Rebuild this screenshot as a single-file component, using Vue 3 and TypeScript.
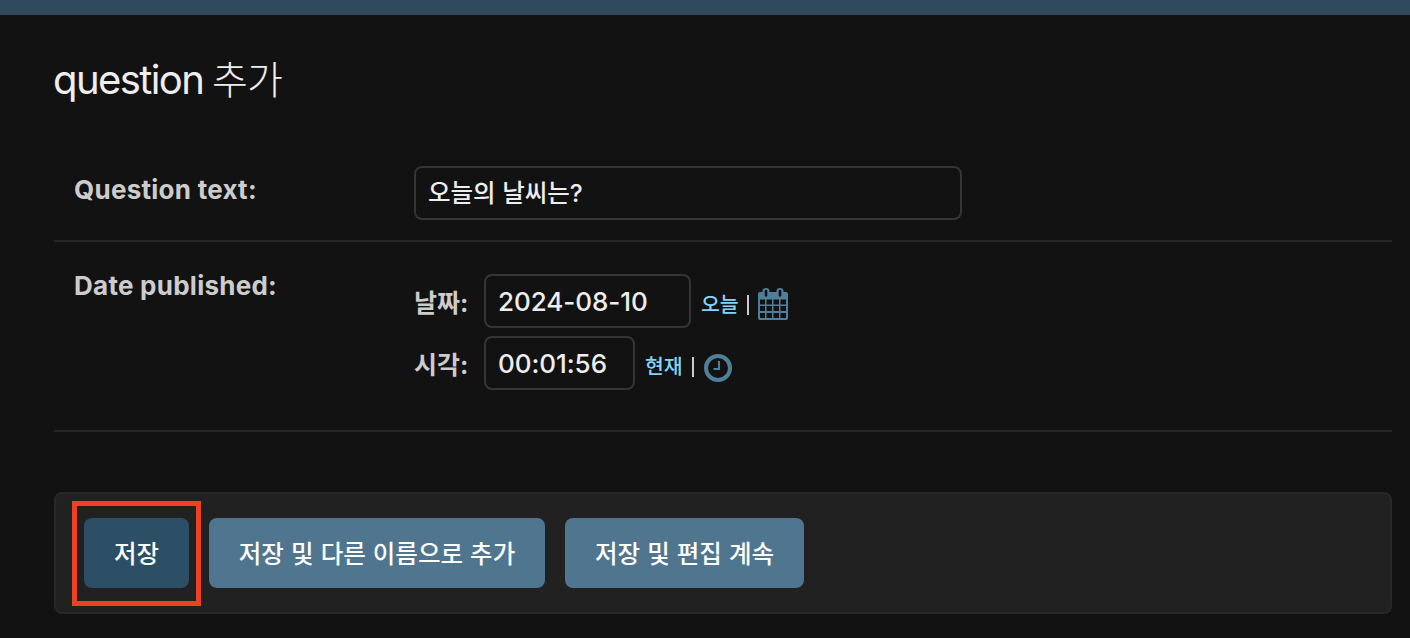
<script setup lang="ts">
import { ref } from 'vue'

const questionText = ref('오늘의 날씨는?')
const publishedDate = ref('2024-08-10')
const publishedTime = ref('00:01:56')
</script>

<template>
  <div class="page">
    <div class="breadcrumbs"></div>
    <main class="content">
      <h1><span class="latin">question</span><span class="thin">추가</span></h1>
      <form @submit.prevent>
        <div class="form-row first">
          <label class="name">Question text:</label>
          <input v-model="questionText" class="field text" type="text" />
        </div>
        <div class="form-row second">
          <label class="name">Date published:</label>
          <div class="datetime">
            <div class="line">
              <span class="sub">날짜:</span>
              <input v-model="publishedDate" class="field date" type="text" />
              <a class="shortcut">오늘</a><i class="bar"></i>
              <svg class="calendar" width="30" height="32" viewBox="0 0 30 32">
                <path fill="#507f9b" fill-rule="evenodd" d="M2 4H4.500V3a3.500 3 0 0 1 7 0v1h7V3a3.500 3 0 0 1 7 0v1H28a2 2 0 0 1 2 2v24a2 2 0 0 1-2 2H2a2 2 0 0 1-2-2V6a2 2 0 0 1 2-2Z M6.700 3v4.500a1.300 1.300 0 0 0 2.600 0V3a1.300 1.300 0 0 0-2.600 0Z M20.700 3v4.500a1.300 1.300 0 0 0 2.600 0V3a1.300 1.300 0 0 0-2.600 0Z M2 11.500v5h5v-5Z M8.500 11.500v5H14v-5Z M15.500 11.500v5H21v-5Z M22.500 11.500v5H28v-5Z M2 18v5h5v-5Z M8.500 18v5H14v-5Z M15.500 18v5H21v-5Z M22.500 18v5H28v-5Z M2 25v5h5v-5Z M8.500 25v5H14v-5Z M15.500 25v5H21v-5Z M22.500 25v5H28v-5Z" />
              </svg>
            </div>
            <div class="line">
              <span class="sub">시각:</span>
              <input v-model="publishedTime" class="field time" type="text" />
              <a class="shortcut now">현재</a><i class="bar"></i>
              <svg class="clock" width="28" height="28" viewBox="0 0 28 28" fill="none" stroke="#507f9b">
                <circle cx="14" cy="14" r="12" stroke-width="4" />
                <path d="M15 7v8H9.500" stroke-width="2" />
              </svg>
            </div>
          </div>
        </div>
        <div class="submit-row">
          <div class="highlight"><button class="primary">저장</button></div>
          <button class="another">저장 및 다른 이름으로 추가</button>
          <button class="continue">저장 및 편집 계속</button>
        </div>
      </form>
    </main>
  </div>
</template>

<style>
body {
  margin: 0;
  background: #121212;
}
</style>

<style scoped>
* {
  box-sizing: border-box;
}
.page {
  height: 638px;
  overflow: hidden;
  background: #121212;
  color: #eee;
  font-family: Inter, "Noto Sans CJK KR", sans-serif;
}
.breadcrumbs {
  height: 15px;
  background: #2f4a5c;
}
.content {
  padding: 41px 18px 0 54px;
}
h1 {
  display: flex;
  align-items: center;
  gap: 9px;
  height: 48px;
  margin: 0 0 40px;
  font-size: 40px;
  font-weight: 400;
  line-height: 48px;
  white-space: nowrap;
}
.latin {
  width: 150px;
  margin-left: -1px;
  letter-spacing: -1.6px;
}
.thin {
  font-weight: 300;
  font-size: 39px;
  letter-spacing: -1px;
}
.form-row {
  display: flex;
  border-bottom: 2px solid #272727;
  padding-left: 20px;
}
.first {
  height: 98px;
  padding-top: 22px;
}
.second {
  height: 190px;
  padding-top: 32px;
}
.name {
  width: 340px;
  height: 48px;
  font-size: 26px;
  font-weight: 700;
  line-height: 48px;
  letter-spacing: 0.26px;
  color: #ccc;
}
.second .name {
  margin-top: -12px;
}
.field {
  height: 54px;
  border: 2px solid #353535;
  border-radius: 8px;
  background: #121212;
  color: #eee;
  padding: 0 12px;
  font: 500 26px/50px Inter, "Noto Sans CJK KR", sans-serif;
  letter-spacing: -0.05px;
  outline: none;
}
.text {
  width: 548px;
  padding-bottom: 3px;
  font-size: 24.500px;
  letter-spacing: 0;
}
.date {
  width: 207px;
}
.time {
  width: 151px;
}
.line {
  display: flex;
  align-items: center;
  height: 54px;
  margin-bottom: 8px;
}
.sub {
  width: 70px;
  margin-top: -1px;
  font-size: 25px;
  font-weight: 700;
  color: #ccc;
}
.shortcut {
  width: 37px;
  margin: 3px 0 0 10px;
  font-size: 20.500px;
  font-weight: 500;
  white-space: nowrap;
  color: #81d4fa;
}
.now {
  width: 38px;
}
.bar {
  width: 2px;
  height: 20px;
  margin: 7px 9px 0;
  background: #ccc;
}
.calendar {
  margin-top: 6px;
}
.clock {
  margin: 9px 0 0 1px;
}
.submit-row {
  display: flex;
  align-items: center;
  height: 122px;
  margin-top: 60px;
  padding-left: 16px;
  border: 2px solid #282828;
  border-radius: 8px;
  background: #212121;
}
.highlight {
  width: 129px;
  height: 105px;
  border: 5px solid #ee4023;
  padding: 12px 7px;
}
button {
  height: 70px;
  padding: 0 0 2px;
  border: 0;
  border-radius: 8px;
  background: #50758f;
  color: #fff;
  font: 500 24.500px "Noto Sans CJK KR", sans-serif;
  word-spacing: 1.600px;
  white-space: nowrap;
}
.primary {
  width: 105px;
  padding-bottom: 0;
  background: #2c4f66;
}
.another {
  width: 336px;
  margin: 0 20px 0 8px;
}
.continue {
  width: 239px;
}
</style>
